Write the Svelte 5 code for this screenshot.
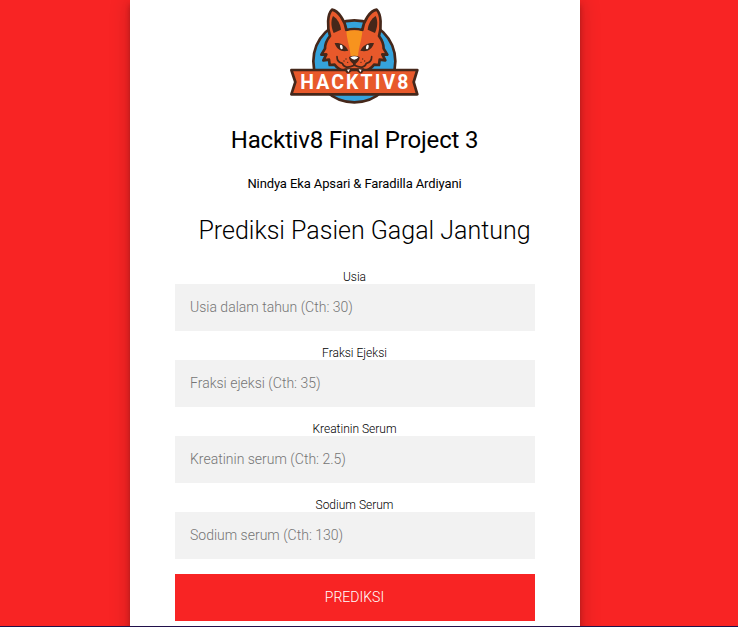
<script>
  const fields = [
    { id: 'usia', label: 'Usia', hint: 'Usia dalam tahun (Cth: 30)' },
    { id: 'ejeksi', label: 'Fraksi Ejeksi', hint: 'Fraksi ejeksi (Cth: 35)' },
    { id: 'kreatinin', label: 'Kreatinin Serum', hint: 'Kreatinin serum (Cth: 2.5)' },
    { id: 'sodium', label: 'Sodium Serum', hint: 'Sodium serum (Cth: 130)' }
  ];
</script>

<div class="page">
  <main class="card">
    <svg class="logo" viewBox="0 0 450 330" role="img" aria-label="Hacktiv8">
      <circle cx="223" cy="184" r="123" fill="#35a3dc" stroke="#45271a" stroke-width="8" />
      <path fill="#e8592b" stroke="#45271a" stroke-width="8" stroke-linejoin="round" d="M150 108 C141 80 142 43 156 29 C175 32 195 62 199 90 Q223 84 247 90 C251 62 270 32 290 29 C304 43 305 80 297 108 C306 120 311 133 311 146 L322 164 L307 163 L316 181 L299 179 L297 195 L282 194 C275 204 261 212 246 217 L223 222 L200 217 C185 212 171 204 164 194 L149 195 L147 179 L130 181 L139 163 L124 164 L135 146 C135 133 140 120 150 108 Z" />
      <path fill="#f7931e" d="M199 94 Q223 88 247 94 C245 120 237 140 234 168 H212 C209 140 201 120 199 94 Z" />
      <g fill="#45271a">
        <path d="M159 48 C151 64 154 83 161 99 L183 89 C181 72 173 57 159 48 Z" />
        <path d="M287 48 C295 64 292 83 285 99 L263 89 C265 72 273 57 287 48 Z" />
        <path d="M164 129 C180 127 197 134 205 152 C185 157 170 149 164 129 Z" />
        <path d="M282 129 C266 127 249 134 241 152 C261 157 276 149 282 129 Z" />
        <path d="M207 171 Q223 163 239 171 Q238 184 227 191 V198 H219 V191 Q208 184 207 171 Z" />
      </g>
      <g fill="#fff">
        <ellipse cx="184" cy="141" rx="4" ry="7" transform="rotate(-15 184 141)" />
        <ellipse cx="262" cy="141" rx="4" ry="7" transform="rotate(15 262 141)" />
        <path d="M211 172 Q223 165 235 172 Q232 178 223 179 Q214 178 211 172 Z" />
      </g>
      <g fill="none" stroke="#45271a" stroke-width="5" stroke-linecap="round" stroke-linejoin="round">
        <path d="M171 170 C171 181 178 188 187 190 C191 203 204 205 223 196 C242 205 255 203 259 190 C268 188 275 181 275 170" />
      </g>
      <g fill="#45271a">
        <circle cx="198" cy="177" r="2" /><circle cx="192" cy="183" r="2" /><circle cx="203" cy="187" r="2" />
        <circle cx="248" cy="177" r="2" /><circle cx="254" cy="183" r="2" /><circle cx="243" cy="187" r="2" />
      </g>
      <path fill="#e8592b" stroke="#45271a" stroke-width="8" stroke-linejoin="round" d="M34 210 H412 L401 246 L412 283 H34 L46 246 Z" />
      <path fill="#45271a" d="M193 205 Q199 226 208 219 L215 213 H231 L238 219 Q247 226 253 205 Z" />
      <path fill="#fff" d="M201 209 L210 208 L205 217 Z M245 209 L236 208 L241 217 Z" />
      <text transform="translate(61 268) scale(.94 1)" textLength="345" lengthAdjust="spacing">HACKTIV8</text>
    </svg>

    <h1>Hacktiv8 Final Project 3</h1>
    <p class="authors">Nindya Eka Apsari &amp; Faradilla Ardiyani</p>
    <h2>Prediksi Pasien Gagal Jantung</h2>

    <form onsubmit={(e) => e.preventDefault()}>
      {#each fields as field}
        <label for={field.id}>{field.label}</label>
        <input id={field.id} type="text" placeholder={field.hint} />
      {/each}
      <button type="submit">PREDIKSI</button>
    </form>
  </main>
</div>

<style>
  .page {
    box-sizing: border-box;
    height: 627px;
    overflow: hidden;
    padding-left: 130px;
    background: #f82424;
    border-bottom: 1px solid #20104a;
    font-family: Roboto, sans-serif;
    font-weight: 300;
    color: #000;
  }
  .card {
    box-sizing: border-box;
    display: flex;
    flex-direction: column;
    align-items: center;
    width: 450px;
    height: 660px;
    padding: 0 45px;
    background: #fff;
    box-shadow: 0 0 20px rgba(0, 0, 0, 0.2), 0 5px 5px rgba(0, 0, 0, 0.24);
  }
  .logo {
    flex: none;
    width: 150px;
    height: 110px;
  }
  .logo text {
    font: 700 62px Roboto, sans-serif;
    fill: #fff;
  }
  h1 {
    margin: 15px 1px 0 0;
    font-size: 24px;
    font-weight: 400;
    line-height: 30px;
    letter-spacing: -0.18px;
    white-space: nowrap;
  }
  .authors {
    margin: 20px 1px 0 0;
    font-size: 13px;
    font-weight: 400;
    line-height: 17px;
    letter-spacing: -0.11px;
  }
  h2 {
    margin: 23px 0 0 19px;
    font-size: 25px;
    font-weight: 300;
    line-height: 32px;
    white-space: nowrap;
  }
  form {
    width: 360px;
    margin-top: 22px;
  }
  label {
    display: block;
    box-sizing: border-box;
    height: 15px;
    padding: 1px 1px 0 0;
    font-size: 12px;
    line-height: 15px;
    text-align: center;
  }
  input {
    display: block;
    box-sizing: border-box;
    width: 100%;
    height: 47px;
    margin: 0 0 14px;
    padding: 14px 15px 16px;
    border: 0;
    border-radius: 0;
    outline: 0;
    background: #f2f2f2;
    font: 300 14px Roboto, sans-serif;
  }
  input::placeholder {
    color: #757575;
    opacity: 1;
  }
  button {
    display: block;
    width: 100%;
    height: 47px;
    margin-top: 15px;
    padding: 0 1px 2px 0;
    border: 0;
    background: #f82424;
    color: #fff;
    font: 300 14px Roboto, sans-serif;
  }
</style>
